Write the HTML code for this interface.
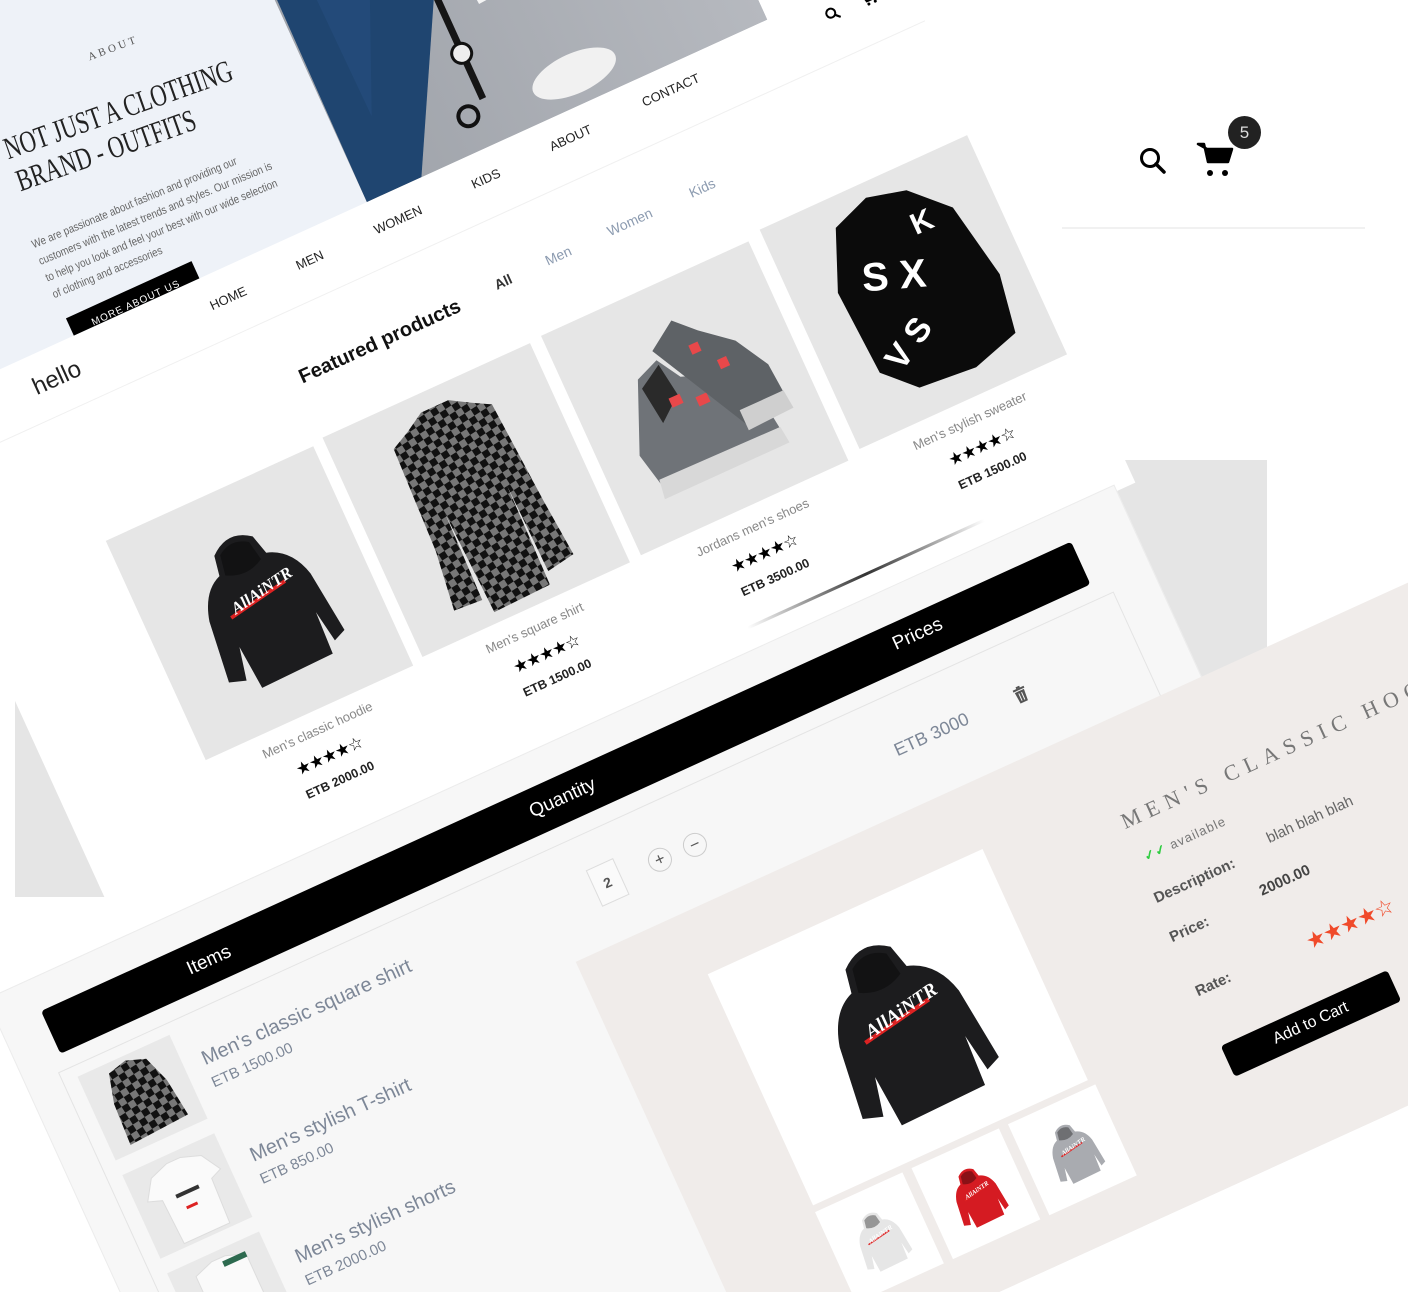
<!DOCTYPE html>
<html><head><meta charset="utf-8">
<style>
*{margin:0;padding:0;box-sizing:border-box}
html,body{width:1408px;height:1292px;overflow:hidden;background:#fff;font-family:"Liberation Sans",sans-serif}
#wrap{position:relative;width:1408px;height:1292px;overflow:hidden;background:#fff}
.abs{position:absolute}
.c{position:absolute;transform:translate(-50%,-50%);white-space:nowrap}
.l{position:absolute;transform:translateY(-50%);white-space:nowrap}
#rot{position:absolute;left:0;top:0;width:10px;height:10px;transform-origin:0 0;transform:rotate(-24.5deg)}
.card{position:absolute;width:228px;height:241px;background:#e6e6e6;overflow:hidden}
.card svg{position:absolute;left:0;top:0}
.nav{font-size:13px;color:#222;text-transform:uppercase}
.pname{font-size:13px;color:#888}
.stars{font-family:"DejaVu Sans",sans-serif;font-size:17px;color:#000;letter-spacing:-1px}
.price{font-size:12.5px;font-weight:bold;color:#222}
.ct{font-size:20px;color:#7d8797}
.cp{font-size:15px;color:#7d8797}
.dl{font-size:15px;color:#555;font-weight:bold}
</style></head><body>
<div id="wrap">
<div class="abs" style="left:1100px;top:460px;width:167px;height:240px;background:#e5e5e5"></div>
<div class="abs" style="left:15px;top:690px;width:400px;height:207px;background:#e5e5e5"></div>

<svg width="0" height="0" style="position:absolute">
<defs>
<pattern id="chk" width="14" height="14" patternUnits="userSpaceOnUse" patternTransform="rotate(-8)">
<rect width="14" height="14" fill="#fff"/><rect width="7" height="7" fill="#111"/><rect x="7" y="7" width="7" height="7" fill="#111"/><rect x="7" width="7" height="7" fill="#777"/><rect y="7" width="7" height="7" fill="#777"/>
</pattern>
<symbol id="hood" viewBox="0 0 150 180">
<path d="M52 20 Q75 0 98 18 L104 40 Q130 48 138 80 L146 150 L132 156 L126 120 L124 168 L40 170 L36 120 L28 156 L10 150 L18 82 Q26 50 48 42 Z" fill="currentColor"/>
<path d="M58 22 Q75 10 92 22 L96 44 Q75 56 54 44 Z" fill="#000" opacity=".35"/>
<rect x="40" y="80" width="70" height="4" fill="#d22" transform="rotate(-10 75 80)"/>
<text x="46" y="82" font-family="Liberation Serif,serif" font-style="italic" font-weight="bold" font-size="18" fill="#fff" transform="rotate(-10 75 80)">AllAiNTR</text>
</symbol>
</defs>
</svg>

<div id="rot">
 <div class="abs" style="left:-277px;top:-500px;width:1110px;height:1410px;background:#fff"></div>
 <div class="abs" style="left:-400px;top:-500px;width:650px;height:836px;background:#eef2f8"></div>
 <div class="abs" style="left:250px;top:-500px;width:440px;height:836px;background:#a7aab1;overflow:hidden">
   <div class="abs" style="left:0;top:0;width:440px;height:836px;background:linear-gradient(90deg,#9fa3aa,#b6b9bf)"></div>
   <svg class="abs" style="left:0;top:0" width="440" height="836">
     <polygon points="8,0 170,0 150,670 60,836 0,836" fill="#1f4570"/>
     <polygon points="30,0 120,0 110,600 40,760" fill="#264f7f" opacity=".6"/>
     <rect x="180" y="580" width="70" height="120" fill="#f4f4f4" transform="rotate(-4 215 640)"/>
     <rect x="240" y="500" width="90" height="150" fill="#dfe4ea"/>
     <rect x="145" y="680" width="7" height="110" fill="#151515"/>
     <circle cx="148" cy="740" r="10" fill="#eee" stroke="#111" stroke-width="3"/>
     <ellipse cx="242" cy="805" rx="45" ry="20" fill="#f1f1f1"/>
     <circle cx="128" cy="800" r="10" fill="none" stroke="#111" stroke-width="4"/>
     <path d="M200 650 q10 -15 25 0 q10 -15 25 0" fill="none" stroke="#111" stroke-width="2"/>
   </svg>
 </div>
 <div class="c" style="left:83px;top:91px;font-family:'Liberation Serif',serif;font-size:11px;letter-spacing:3px;color:#555;transform:translate(-50%,-50%) rotate(4deg)">ABOUT</div>
 <div class="c" style="left:62px;top:149px;font-family:'Liberation Serif',serif;font-size:31px;color:#222;transform:translate(-50%,-50%) rotate(5deg) scaleX(.72)">NOT JUST A CLOTHING</div>
 <div class="c" style="left:34px;top:181px;font-family:'Liberation Serif',serif;font-size:31px;color:#222;transform:translate(-50%,-50%) rotate(5deg) scaleX(.72)">BRAND - OUTFITS</div>
 <div class="abs" style="left:-72px;top:228px;width:300px;font-size:11.5px;line-height:18px;color:#666;transform:rotate(2deg) scaleX(.85);transform-origin:0 0">We are passionate about fashion and providing our customers with the latest trends and styles. Our mission is to help you look and feel your best with our wide selection of clothing and accessories</div>
 <div class="abs" style="left:-72px;top:317px;width:138px;height:19px;background:#000;overflow:hidden;color:#fff;font-size:10px;letter-spacing:1px;padding:10px 0 0 22px">MORE ABOUT US</div>

 <div class="c" style="left:-105px;top:368px;font-size:24px;color:#222">hello</div>
 <div class="c nav" style="left:84px;top:366px">Home</div>
 <div class="c nav" style="left:174px;top:365px">Men</div>
 <div class="c nav" style="left:271px;top:365px">Women</div>
 <div class="c nav" style="left:368px;top:364px">Kids</div>
 <div class="c nav" style="left:462px;top:362px">About</div>
 <div class="c nav" style="left:573px;top:360px">Contact</div>
 <svg class="abs" style="left:744px;top:350px" width="16" height="16"><circle cx="6.5" cy="6.5" r="4.5" fill="none" stroke="#000" stroke-width="2"/><line x1="10" y1="10" x2="14" y2="14" stroke="#000" stroke-width="2.2"/></svg>
 <svg class="abs" style="left:782px;top:350px" width="18" height="16"><path d="M1 2h3l2 9h9l2-7H5" fill="#000" stroke="#000" stroke-width="1.5"/><circle cx="7" cy="14" r="1.5"/><circle cx="14" cy="14" r="1.5"/></svg>
 <div class="abs" style="left:-277px;top:402px;width:1110px;height:1px;background:#f0f0f0"></div>

 <div class="c" style="left:204px;top:469px;font-size:20px;font-weight:bold;color:#111">Featured products</div>
 <div class="c" style="left:341px;top:465px;font-size:14px;color:#333;font-weight:bold">All</div>
 <div class="c" style="left:402px;top:464px;font-size:14px;color:#8c9bb0">Men</div>
 <div class="c" style="left:481px;top:463px;font-size:14px;color:#8c9bb0">Women</div>
 <div class="c" style="left:561px;top:462px;font-size:14px;color:#8c9bb0">Kids</div>

 <div class="card" style="left:-128px;top:536px"><svg width="228" height="241" style="color:#1c1c1e"><use href="#hood" x="44" y="40" width="140" height="168"/></svg></div>
 <div class="card" style="left:112px;top:532px"><svg width="228" height="241">
   <path d="M80 30 L100 18 L130 18 L150 30 L168 40 L175 150 L180 210 L150 215 L148 120 L146 228 L84 230 L80 120 L78 214 L48 212 L56 150 L60 40 Z" fill="url(#chk)"/>
 </svg></div>
 <div class="card" style="left:353px;top:530px"><svg width="228" height="241">
   <path d="M40 150 L70 80 L95 70 L110 95 L150 110 L175 150 L180 190 L50 195 Z" fill="#6f7378"/>
   <path d="M48 180 L180 182 L182 200 L45 200 Z" fill="#d8d8d8"/>
   <path d="M70 90 L95 75 L100 110 L75 130 Z" fill="#2a2a2a"/>
   <rect x="90" y="110" width="12" height="10" fill="#e8484a"/><rect x="115" y="120" width="12" height="10" fill="#e8484a"/>
   <path d="M95 60 L125 40 L145 60 L175 85 L195 120 L198 160 L150 165 Z" fill="#5e6266"/>
   <rect x="130" y="70" width="10" height="10" fill="#e8484a"/><rect x="150" y="95" width="10" height="10" fill="#e8484a"/>
   <path d="M150 150 L198 150 L200 170 L150 172 Z" fill="#cfcfcf"/>
 </svg></div>
 <div class="card" style="left:596px;top:524px"><svg width="228" height="241">
   <path d="M70 30 L110 15 L150 25 L185 60 L200 140 L190 200 L140 215 L80 210 L50 180 L45 90 Z" fill="#0b0b0b"/>
   <text x="70" y="110" font-size="40" font-weight="bold" fill="#fff" font-family="Liberation Sans" transform="rotate(20 100 100)">S X</text>
   <text x="60" y="170" font-size="34" font-weight="bold" fill="#fff" font-family="Liberation Sans" transform="rotate(-30 100 160)">V S</text>
   <text x="140" y="70" font-size="30" font-weight="bold" fill="#fff" font-family="Liberation Sans">K</text>
 </svg></div>

 <div class="c pname" style="left:-14px;top:796px">Men's classic hoodie</div>
 <div class="c stars" style="left:-14px;top:825px">★★★★☆</div>
 <div class="c price" style="left:-14px;top:851px">ETB 2000.00</div>
 <div class="c pname" style="left:226px;top:793px">Men's square shirt</div>
 <div class="c stars" style="left:226px;top:822px">★★★★☆</div>
 <div class="c price" style="left:226px;top:848px">ETB 1500.00</div>
 <div class="c pname" style="left:466px;top:792px">Jordans men's shoes</div>
 <div class="c stars" style="left:466px;top:821px">★★★★☆</div>
 <div class="c price" style="left:466px;top:847px">ETB 3500.00</div>
 <div class="c pname" style="left:708px;top:785px">Men's stylish sweater</div>
 <div class="c stars" style="left:708px;top:814px">★★★★☆</div>
 <div class="c price" style="left:708px;top:840px">ETB 1500.00</div>
 <div class="abs" style="left:420px;top:880px;width:260px;height:3px;background:linear-gradient(90deg,#fff,#333,#fff)"></div>

 <div class="abs" style="left:-427px;top:903px;width:1240px;height:687px;background:#f7f7f7;border:1px solid #ececec"></div>
 <div class="abs" style="left:-382px;top:937px;width:1132px;height:47px;background:#000;border-radius:4px"></div>
 <div class="c" style="left:-208px;top:961px;font-size:19px;color:#fff">Items</div>
 <div class="c" style="left:181px;top:960px;font-size:19px;color:#fff">Quantity</div>
 <div class="c" style="left:572px;top:958px;font-size:19px;color:#fff">Prices</div>
 <div class="abs" style="left:-392px;top:1000px;width:1160px;height:570px;border:1px solid #e4e4e4"></div>

 <div class="abs" style="left:-376px;top:1012px;width:101px;height:92px;background:#e9e9e9"><svg width="101" height="92"><path d="M30 10 L50 5 L70 12 L80 40 L85 80 L20 84 L22 40 Z" fill="url(#chk)"/></svg></div>
 <div class="l ct" style="left:-255px;top:1049px">Men's classic square shirt</div>
 <div class="l cp" style="left:-256px;top:1074px">ETB 1500.00</div>
 <div class="abs" style="left:-376px;top:1120px;width:101px;height:92px;background:#e9e9e9"><svg width="101" height="92"><path d="M25 15 L45 8 L60 8 L80 15 L92 35 L80 40 L78 88 L28 88 L26 40 L12 35 Z" fill="#fafafa" stroke="#ddd"/><rect x="40" y="40" width="25" height="4" fill="#333"/><rect x="45" y="55" width="12" height="3" fill="#d22"/></svg></div>
 <div class="l ct" style="left:-251px;top:1157px">Men's stylish T-shirt</div>
 <div class="l cp" style="left:-252px;top:1182px">ETB 850.00</div>
 <div class="abs" style="left:-376px;top:1228px;width:101px;height:92px;background:#e9e9e9"><svg width="101" height="92"><path d="M25 15 L45 8 L60 8 L80 15 L80 60 L25 60 Z" fill="#fafafa" stroke="#ddd"/><rect x="55" y="12" width="25" height="6" fill="#2d6a4f"/></svg></div>
 <div class="l ct" style="left:-252px;top:1268px">Men's stylish shorts</div>
 <div class="l cp" style="left:-253px;top:1293px">ETB 2000.00</div>

 <div class="abs" style="left:172px;top:1035px;width:30px;height:40px;border:1px solid #ddd;background:#fafafa;font-size:14px;font-weight:bold;color:#555;text-align:center;line-height:38px">2</div>
 <div class="c" style="left:244px;top:1056px;width:24px;height:24px;border:1px solid #ccc;border-radius:50%;font-size:17px;color:#555;text-align:center;line-height:21px">+</div>
 <div class="c" style="left:282px;top:1057px;width:24px;height:24px;border:1px solid #ccc;border-radius:50%;font-size:17px;color:#555;text-align:center;line-height:21px">−</div>
 <div class="c" style="left:543px;top:1055px;font-size:18px;color:#7d8797">ETB 3000</div>
 <svg class="c" style="left:641px;top:1055px" width="14" height="17"><rect x="1" y="2" width="12" height="2" fill="#555"/><rect x="5" y="0" width="4" height="2" fill="#555"/><path d="M2 5h10l-1 12H3z" fill="#555"/><rect x="5" y="7" width="1" height="8" fill="#f7f7f7"/><rect x="8" y="7" width="1" height="8" fill="#f7f7f7"/></svg>

 <div class="abs" style="left:125px;top:1114px;width:1200px;height:476px;background:#f0ecea"></div>
 <div class="abs" style="left:240px;top:1180px;width:302px;height:254px;background:#fff"><svg width="302" height="254" style="color:#1c1c1e"><use href="#hood" x="70" y="30" width="165" height="200"/></svg></div>
 <div class="abs" style="left:239px;top:1441px;width:96px;height:100px;background:#fff"><svg width="96" height="100" style="color:#e6e6e6"><use href="#hood" x="20" y="20" width="55" height="65"/></svg></div>
 <div class="abs" style="left:345px;top:1441px;width:96px;height:100px;background:#fff"><svg width="96" height="100" style="color:#d51b22"><use href="#hood" x="20" y="20" width="55" height="65"/></svg></div>
 <div class="abs" style="left:451px;top:1441px;width:96px;height:100px;background:#fff"><svg width="96" height="100" style="color:#a9abb0"><use href="#hood" x="20" y="20" width="55" height="65"/></svg></div>

 <div class="l" style="left:680px;top:1214px;font-family:'Liberation Serif',serif;font-size:22px;letter-spacing:7px;color:#777">MEN'S CLASSIC HOODIE</div>
 <div class="l" style="left:686px;top:1255px;font-size:13px;color:#777;letter-spacing:1px"><span style="color:#2ecc40;font-weight:bold">✓✓</span> available</div>
 <div class="l dl" style="left:678px;top:1297px">Description:</div>
 <div class="c" style="left:852px;top:1289px;font-size:15px;color:#666">blah blah blah</div>
 <div class="l dl" style="left:676px;top:1339px">Price:</div>
 <div class="c" style="left:804px;top:1334px;font-size:15px;font-weight:bold;color:#444">2000.00</div>
 <div class="l dl" style="left:677px;top:1399px">Rate:</div>
 <div class="c" style="left:845px;top:1401px;font-family:'DejaVu Sans',sans-serif;font-size:22px;color:#f04a2a;letter-spacing:-1px">★★★★☆</div>
 <div class="abs" style="left:677px;top:1458px;width:183px;height:34px;background:#000;border-radius:4px;color:#fff;font-size:16px;text-align:center;line-height:34px">Add to Cart</div>
</div>

<svg class="abs" style="left:1138px;top:146px" width="30" height="30"><circle cx="12" cy="12" r="8.5" fill="none" stroke="#000" stroke-width="3"/><line x1="18" y1="18" x2="26" y2="26" stroke="#000" stroke-width="3.5" stroke-linecap="round"/></svg>
<svg class="abs" style="left:1196px;top:140px" width="40" height="40"><path d="M2 4h6l4 18h20l4-13H11z" fill="#000" stroke="#000" stroke-width="2.5" stroke-linejoin="round"/><circle cx="14" cy="33" r="3"/><circle cx="29" cy="33" r="3"/></svg>
<div class="abs" style="left:1228px;top:116px;width:33px;height:33px;border-radius:50%;background:#222;color:#ddd;font-size:17px;text-align:center;line-height:33px">5</div>
<div class="abs" style="left:1062px;top:227px;width:303px;height:2px;background:#f1f1f1"></div>
</div>
</body></html>
